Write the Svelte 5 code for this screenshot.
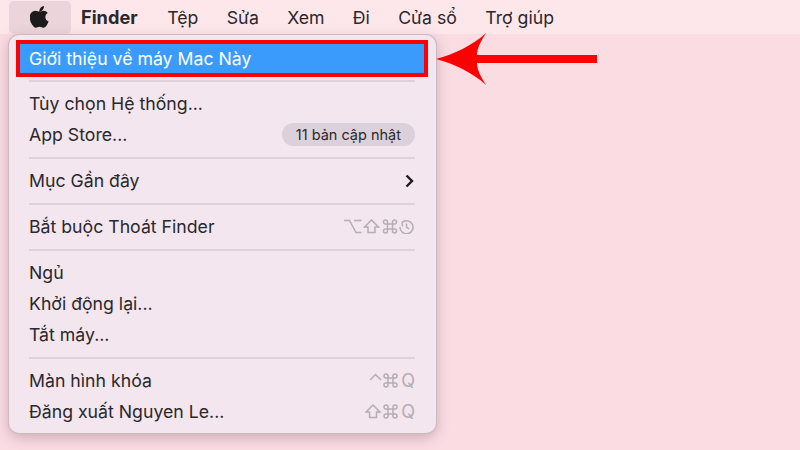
<script>
	const titles = ['Tệp', 'Sửa', 'Xem', 'Đi', 'Cửa sổ', 'Trợ giúp'];
	// command key glyph, 15px box
	const cmd = 'M5 5h5v5H5zM5 5V3a2 2 0 1 0-2 2h2M10 5V3a2 2 0 1 1 2 2h-2M5 10v2a2 2 0 1 1-2-2h2M10 10v2a2 2 0 1 0 2-2h-2';
	const shift = 'M8 1 15 8h-3.500v5.500h-7V8H1z';
</script>

<div class="screen">
	<header class="menubar">
		<div class="apple">
			<svg viewBox="0 0 20 24" width="20" height="24" aria-hidden="true">
				<path fill="#1c1a1c" d="M14.2 1c.1 1.600-.5 3-1.400 4-.9 1.100-2.300 1.900-3.700 1.800-.2-1.500.5-3 1.400-4C11.400 1.800 13 1.100 14.200 1zM19.200 17.200c-.6 1.300-.9 1.900-1.600 3-1 1.600-2.500 3.500-4.200 3.500-1.600 0-2-1-4.100-1-2.100 0-2.600 1-4.100 1-1.800 0-3.100-1.800-4.100-3.300C-1.700 16.200-2 11.300-.3 8.800 1 7 2.900 5.900 4.700 5.900c1.800 0 3 1 4.500 1 1.500 0 2.400-1 4.500-1 1.600 0 3.300.9 4.500 2.400-3.900 2.200-3.300 7.700 1 8.900z" transform="translate(1 0) scale(.92 .96)"/>
			</svg>
		</div>
		<span class="title bold">Finder</span>
		{#each titles as t}
			<span class="title">{t}</span>
		{/each}
	</header>

	<nav class="menu">
		<div class="row active">Giới thiệu về máy Mac Này</div>
		<div class="sep"></div>
		<div class="row">Tùy chọn Hệ thống...</div>
		<div class="row">App Store...<span class="pill">11 bản cập nhật</span></div>
		<div class="sep"></div>
		<div class="row">
			Mục Gần đây
			<svg class="chev" viewBox="0 0 9 14" width="9" height="14" aria-hidden="true">
				<path d="M1.500 1.500 7 7l-5.500 5.500" fill="none" stroke="#1c1a1c" stroke-width="2.400"/>
			</svg>
		</div>
		<div class="sep"></div>
		<div class="row">
			Bắt buộc Thoát Finder
			<span class="keys">
				<svg viewBox="0 0 71 15" width="71" height="15" aria-hidden="true">
					<g fill="none" stroke="#b5acb6" stroke-width="1.500">
						<path d="M0 1.500h5.500l6.500 12h5.500M10 1.500h7.500"/>
						<path transform="translate(19.500 0)" d={shift}/>
						<path transform="translate(38.500 0)" d={cmd}/>
						<path d="M58 3.500a6.500 6.500 0 1 1-2 4.500M58 3.500l3.500-2M58 3.500l.5 3.800M62.500 4.500V8l2.500 1.800"/>
					</g>
				</svg>
			</span>
		</div>
		<div class="sep"></div>
		<div class="row">Ngủ</div>
		<div class="row">Khởi động lại...</div>
		<div class="row">Tắt máy...</div>
		<div class="sep"></div>
		<div class="row">
			Màn hình khóa
			<span class="keys">
				<svg viewBox="0 0 30 15" width="30" height="15" aria-hidden="true">
					<g fill="none" stroke="#b5acb6" stroke-width="1.500">
						<path d="M1 7l5.500-5.500L12 7"/>
						<path transform="translate(14 0)" d={cmd}/>
					</g>
				</svg>Q
			</span>
		</div>
		<div class="row">
			Đăng xuất Nguyen Le...
			<span class="keys">
				<svg viewBox="0 0 34 15" width="34" height="15" aria-hidden="true">
					<g fill="none" stroke="#b5acb6" stroke-width="1.500">
						<path d={shift}/>
						<path transform="translate(18 0)" d={cmd}/>
					</g>
				</svg>Q
			</span>
		</div>
	</nav>

	<svg class="arrow" viewBox="0 0 162 52" width="162" height="52" aria-hidden="true">
		<path fill="#fe0000" d="M0 26C18 21 36 13 50 0C45 8 41 15 41 22H161V30H41C41 37 45 44 50 52C36 39 18 31 0 26z"/>
	</svg>
</div>

<style>
	:global(body) {
		margin: 0;
	}

	.screen {
		position: relative;
		width: 800px;
		height: 450px;
		overflow: hidden;
		background: #fbdce3;
		font-family: Inter, "Noto Sans", sans-serif;
		font-size: 17.700px;
		color: #2a282b;
	}

	.menubar {
		display: flex;
		align-items: center;
		height: 34px;
		background: #fde7eb;
	}

	.apple {
		display: flex;
		align-items: center;
		justify-content: center;
		width: 62px;
		height: 33px;
		margin-left: 9px;
		margin-right: 10px;
		border-radius: 5px;
		background: #ebd5da;
	}

	.title {
		margin-right: 28.300px;
	}

	.bold {
		margin-right: 29.500px;
		font-size: 18.200px;
		font-weight: 700;
	}

	.menu {
		position: absolute;
		left: 9px;
		top: 35px;
		box-sizing: border-box;
		width: 427px;
		height: 398px;
		padding: 8px 21px 5px 20px;
		border-radius: 10px;
		background: #f3e6ef;
		box-shadow: 0 0 0 1px #cdb9c1, 0 4px 14px rgba(110, 70, 85, 0.35);
	}

	.row {
		display: flex;
		align-items: center;
		justify-content: space-between;
		height: 31px;
	}

	.active {
		position: relative;
		color: #fff;
		margin: 1px -9px 0;
		height: 29px;
		padding: 0 9px;
		background: #3a9bfd;
		outline: 4px solid #fe0000;
	}

	.sep {
		height: 2px;
		margin: 7px 0 6px;
		background: #e0d0d9;
	}

	.pill {
		height: 23px;
		padding: 0 14px;
		border-radius: 12px;
		background: #dcd1da;
		font-size: 14.500px;
		line-height: 23px;
	}

	.chev {
		margin-right: 1px;
	}

	.keys {
		display: flex;
		align-items: center;
		gap: 2px;
		color: #b5acb6;
		font-size: 18px;
	}

	.arrow {
		position: absolute;
		left: 436px;
		top: 33px;
	}
</style>
